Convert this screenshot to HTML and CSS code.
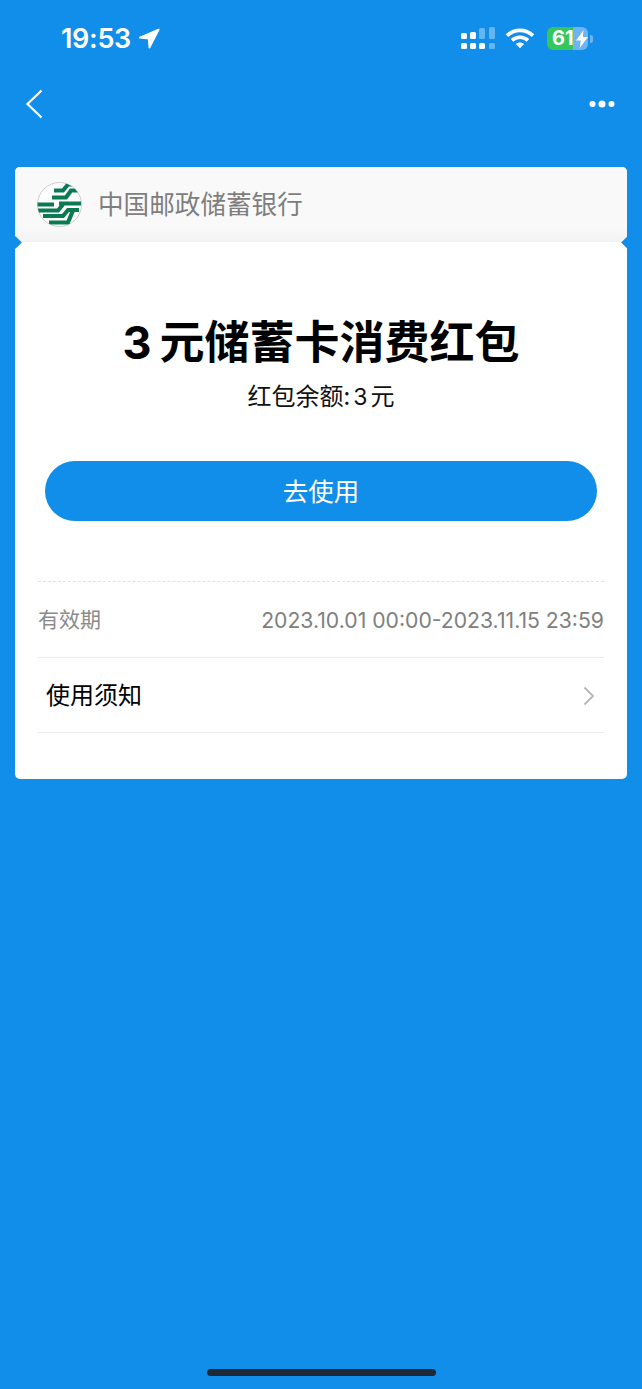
FILE: index.html
```html
<!DOCTYPE html>
<html lang="zh-CN">
<head>
<meta charset="utf-8">
<title>3元储蓄卡消费红包</title>
<link rel="stylesheet" href="styles.css">
</head>
<body>
<div class="page">
  <header class="status">
    <div class="status-left">
      <span class="time">19:53</span>
      <svg class="arrow" viewBox="0 0 22 22" width="22" height="22"><path d="M20.600 1.600 2 9.600l8.800.8.700 9z" fill="#fff" stroke="#fff" stroke-width="2" stroke-linejoin="round"/></svg>
    </div>
    <div class="status-right">
      <svg class="signal" viewBox="0 0 34 23" width="34" height="23">
        <g fill="#fff">
          <rect x="0" y="6" width="6" height="6" rx="1.500"/><rect x="9" y="5" width="6" height="7" rx="1.500"/>
          <rect x="0" y="16" width="6" height="6" rx="1.500"/><rect x="9" y="16" width="6" height="6" rx="1.500"/><rect x="18" y="16" width="6" height="6" rx="1.500"/>
        </g>
        <g fill="#fff" fill-opacity=".35">
          <rect x="18" y="1" width="6" height="11" rx="1.500"/><rect x="28" y="0" width="6" height="12" rx="1.500"/><rect x="28" y="16" width="6" height="6" rx="1.500"/>
        </g>
      </svg>
      <svg class="wifi" viewBox="0 0 30 22" width="30" height="22" fill="none" stroke="#fff" stroke-width="3.600">
        <path d="M2 8.600C9.200 1.600 20.800 1.600 28 8.600"/><path d="M7 13.400c4.400-4.200 11.600-4.200 16 0"/><path d="M15 21.200 10.900 17c2.300-2 5.900-2 8.200 0z" fill="#fff" stroke="none"/>
      </svg>
      <div class="battery">
        <div class="battery-body">
          <span class="battery-num">61</span>
          <svg class="bolt" viewBox="0 0 12 18" width="12" height="18"><path d="M7.500 0 0 10.500h4.800L3.700 18 12 7H6.800z" fill="#fff"/></svg>
        </div>
        <span class="battery-nub"></span>
      </div>
    </div>
  </header>

  <nav class="navbar">
    <svg class="back" viewBox="0 0 18 30" width="18" height="30" fill="none" stroke="#fff" stroke-width="2.200"><path d="M16.500 1.500 2.500 15l14 13.500"/></svg>
    <svg class="more" viewBox="0 0 26 8" width="26" height="8" fill="#fff"><circle cx="3.500" cy="4" r="3"/><circle cx="13" cy="4" r="3.500"/><circle cx="22.500" cy="4" r="3"/></svg>
  </nav>

  <main class="card">
    <div class="bank">
      <svg class="logo" viewBox="0 0 45 45" width="45" height="45">
        <defs><clipPath id="c"><circle cx="22.500" cy="22.500" r="22"/></clipPath></defs>
        <circle cx="22.500" cy="22.500" r="22" fill="#fff" stroke="#ccc" stroke-width="1"/>
        <g clip-path="url(#c)" fill="none" stroke="#0b7a52" stroke-width="4.200">
          <path d="M17 8.500h9l5-6h11"/>
          <path d="M15 15.500h14l5-7h11"/>
          <path d="M0 22.500h17"/>
          <path d="M22 21.500h22"/>
          <path d="M1 28.500h20l5-6"/>
          <path d="M6 34h20l5-6h11"/>
          <path d="M12 40.500h19l5-12"/>
        </g>
      </svg>
      <span class="bank-name">中国邮政储蓄银行</span>
    </div>
    <span class="notch notch-l"></span>
    <span class="notch notch-r"></span>
    <div class="body">
      <h1 class="title"><span class="title-num">3</span>元储蓄卡消费红包</h1>
      <p class="balance">红包余额:<span class="balance-num">3</span>元</p>
      <button class="use">去使用</button>
      <div class="dash"></div>
      <div class="row validity">
        <span class="label">有效期</span>
        <span class="dates">2023.10.01 00:00-2023.11.15 23:59</span>
      </div>
      <div class="row notice">
        <span class="notice-text">使用须知</span>
        <svg class="chev" viewBox="0 0 12 20" width="12" height="20" fill="none" stroke="#b5b5b5" stroke-width="1.800"><path d="M1.500 1.500 10 10l-8.500 8.500"/></svg>
      </div>
    </div>
  </main>

  <div class="home"></div>
</div>
</body>
</html>
```

FILE: styles.css
```css
* { box-sizing: border-box; }
html, body { margin: 0; padding: 0; }
body {
  background: #118eea;
  font-family: "Noto Sans CJK SC", "Noto Sans", sans-serif;
}
.page {
  width: 642px;
  height: 1389px;
  position: relative;
  overflow: hidden;
  background: #118eea;
}
.status {
  height: 76px;
  padding: 26px 49px 0 61px;
  display: flex;
  justify-content: space-between;
  align-items: flex-start;
}
.status-left { display: flex; align-items: center; gap: 7px; }
.time {
  font-family: Inter, sans-serif;
  font-size: 27px;
  line-height: 26px;
  font-weight: 600;
  color: #fff;
  letter-spacing: -.3px;
}
.status-right { display: flex; align-items: flex-start; }
.signal { margin-top: 1px; }
.wifi { margin: 1px 0 0 10px; }
.battery { display: flex; align-items: center; margin: 1px 0 0 12px; }
.battery-body {
  width: 41px;
  height: 23px;
  border-radius: 6px;
  background: linear-gradient(90deg, #35c75a 0 26px, #6db4f1 26px);
  display: flex;
  align-items: center;
  padding-left: 5px;
}
.battery-num {
  font-family: Inter, sans-serif;
  font-size: 20px;
  line-height: 23px;
  font-weight: 700;
  color: #fff;
  width: 23px;
}
.bolt { margin-left: 1px; }
.battery-nub {
  width: 3px;
  height: 8px;
  margin-left: 2px;
  border-radius: 0 2px 2px 0;
  background: #6db4f1;
}
.navbar {
  height: 91px;
  padding: 13px 27px 0 25px;
  display: flex;
  justify-content: space-between;
  align-items: flex-start;
}
.more { margin-top: 11px; }
.card {
  margin: 0 15px;
  width: 612px;
  height: 612px;
  border-radius: 5px;
  background: #fff;
  position: relative;
}
.bank {
  height: 75px;
  padding: 15px 22px 0;
  display: flex;
  align-items: flex-start;
  gap: 16px;
  border-radius: 5px 5px 0 0;
  background: linear-gradient(#f9f9f9 0, #f9f9f9 80%, #f2f2f2 100%);
}
.bank-name {
  font-size: 25.600px;
  line-height: 42px;
  color: #7e7e7e;
}
.notch {
  position: absolute;
  top: 70.500px;
  width: 9px;
  height: 9px;
  background: #118eea;
  transform: rotate(45deg);
}
.notch-l { left: -4.500px; }
.notch-r { right: -4.500px; }
.body { padding: 0 23px; display: flex; flex-direction: column; }
.title {
  margin: 69px 0 0;
  text-align: center;
  font-size: 45px;
  line-height: 58px;
  font-weight: 700;
  color: #000;
}
.title-num { font-family: Inter, sans-serif; margin-right: 8px; }
.balance {
  margin: 6px 0 0;
  text-align: center;
  font-size: 24px;
  line-height: 34px;
  color: #111;
  word-spacing: 0;
}
.balance-num { font-family: Inter, sans-serif; font-size: 23px; margin: 0 3px; }
.use {
  display: block;
  width: 552px;
  height: 60px;
  margin: 47px 0 0 7px;
  padding: 0 0 4px;
  border: 0;
  border-radius: 30px;
  background: #118eea;
  color: #fff;
  font-family: inherit;
  font-size: 25.500px;
}
.dash { margin-top: 60px; border-top: 1px dashed #e2e2e2; }
.row {
  display: flex;
  justify-content: space-between;
  align-items: center;
  border-bottom: 1px solid #ececec;
}
.validity { height: 76px; }
.label { font-size: 21px; line-height: 30px; color: #8b8b8b; margin-bottom: 4px; }
.dates {
  font-family: Inter, sans-serif;
  font-size: 21.200px;
  color: #808080;
  margin-top: 1px;
}
.notice { height: 75px; padding: 0 9px 0 8px; }
.notice-text { font-size: 24px; line-height: 34px; color: #000; margin-bottom: 2px; }
.chev { margin-bottom: -1px; }
.home {
  position: absolute;
  left: 207px;
  top: 1369px;
  width: 229px;
  height: 7px;
  border-radius: 4px;
  background: #1c2a38;
}
```
